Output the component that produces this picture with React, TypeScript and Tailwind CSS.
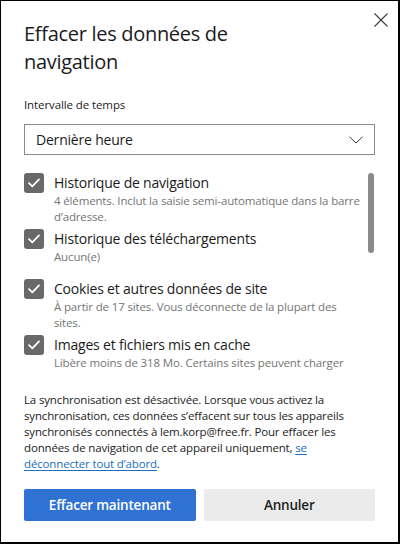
const items = [
  {
    title: "Historique de navigation",
    desc: "4 éléments. Inclut la saisie semi-automatique dans la barre d’adresse.",
    space: "mb-[4px]",
  },
  { title: "Historique des téléchargements", desc: "Aucun(e)", space: "mb-[14px]" },
  {
    title: "Cookies et autres données de site",
    desc: "À partir de 17 sites. Vous déconnecte de la plupart des sites.",
    space: "mb-[4px]",
  },
  {
    title: "Images et fichiers mis en cache",
    desc: "Libère moins de 318 Mo. Certains sites peuvent charger plus lentement lors de votre prochaine visite.",
    space: "mb-[4px]",
  },
];

function CheckBox() {
  return (
    <div className="w-[20px] h-[20px] rounded-[3px] bg-[#696969] flex items-center justify-center shrink-0">
      <svg width="12" height="10" viewBox="0 0 12 10" fill="none">
        <path d="M1 5.2 L4.3 8.4 L11 1.4" stroke="white" strokeWidth="1.8" strokeLinecap="round" strokeLinejoin="round" />
      </svg>
    </div>
  );
}

export default function App() {
  return (
    <div
      className="w-[400px] h-[544px] bg-white border-l border-t border-r-2 border-b-2 border-black relative overflow-hidden text-[#1b1b1b]"
      style={{ fontFamily: '"Open Sans", "Noto Sans", sans-serif' }}
    >
      {/* Close */}
      <button className="absolute top-[12px] left-[373px] w-[14px] h-[14px]">
        <svg width="14" height="14" viewBox="0 0 14 14" fill="none">
          <path d="M0.5 0.5 L13.5 13.5 M13.5 0.5 L0.5 13.5" stroke="#3a3a3a" strokeWidth="1.1" />
        </svg>
      </button>

      <div className="pl-[23px] pr-[23px] pt-[19px]">
        <h1 className="text-[20px] leading-[28px] font-normal tracking-[-0.3px] pr-[100px]">
          Effacer les données de navigation
        </h1>

        <div className="mt-[21px] text-[11.5px] leading-[16px] tracking-[-0.1px]">Intervalle de temps</div>

        {/* Select */}
        <div className="mt-[11px] h-[31px] border border-[#8a8a8a] flex items-center justify-between pl-[11px] pr-[11px]">
          <span className="text-[14px] tracking-[-0.2px]">Dernière heure</span>
          <svg width="14" height="8" viewBox="0 0 14 8" fill="none">
            <path d="M0.5 0.8 L7 7 L13.5 0.8" stroke="#333" strokeWidth="1" />
          </svg>
        </div>

        {/* Scrollable list */}
        <div className="mt-[18px] h-[200px] overflow-hidden flex">
          <div className="flex-1 flex flex-col pr-[2px]">
            {items.map((item) => (
              <div key={item.title} className={`flex gap-[10px] ${item.space}`}>
                <CheckBox />
                <div className="flex flex-col">
                  <span className="text-[14px] leading-[20px] tracking-[-0.2px]">{item.title}</span>
                  <span className="text-[11.5px] leading-[16px] tracking-[-0.15px] text-[#757575]">{item.desc}</span>
                </div>
              </div>
            ))}
          </div>
          <div className="w-[6px] h-[80px] rounded-full bg-[#8a8a8a] shrink-0 mr-[1px]" />
        </div>

        <p className="mt-[19px] text-[11.5px] leading-[16px] tracking-[-0.15px] text-[#222]">
          La synchronisation est désactivée. Lorsque vous activez la synchronisation, ces données
          s’effacent sur tous les appareils synchronisés connectés à lem.korp@free.fr. Pour effacer
          les données de navigation de cet appareil uniquement,{" "}
          <a className="text-[#1a6fc0] underline underline-offset-2">se déconnecter tout d’abord</a>.
        </p>

        <div className="mt-[17px] flex gap-[8px]">
          <button className="flex-1 h-[32px] rounded-[2px] bg-[#2f72d4] text-white text-[13.5px] font-semibold tracking-[-0.2px]">
            Effacer maintenant
          </button>
          <button className="flex-1 h-[32px] rounded-[2px] bg-[#ebebeb] text-[#222] text-[13.5px] font-semibold tracking-[-0.2px]">
            Annuler
          </button>
        </div>
      </div>
    </div>
  );
}
